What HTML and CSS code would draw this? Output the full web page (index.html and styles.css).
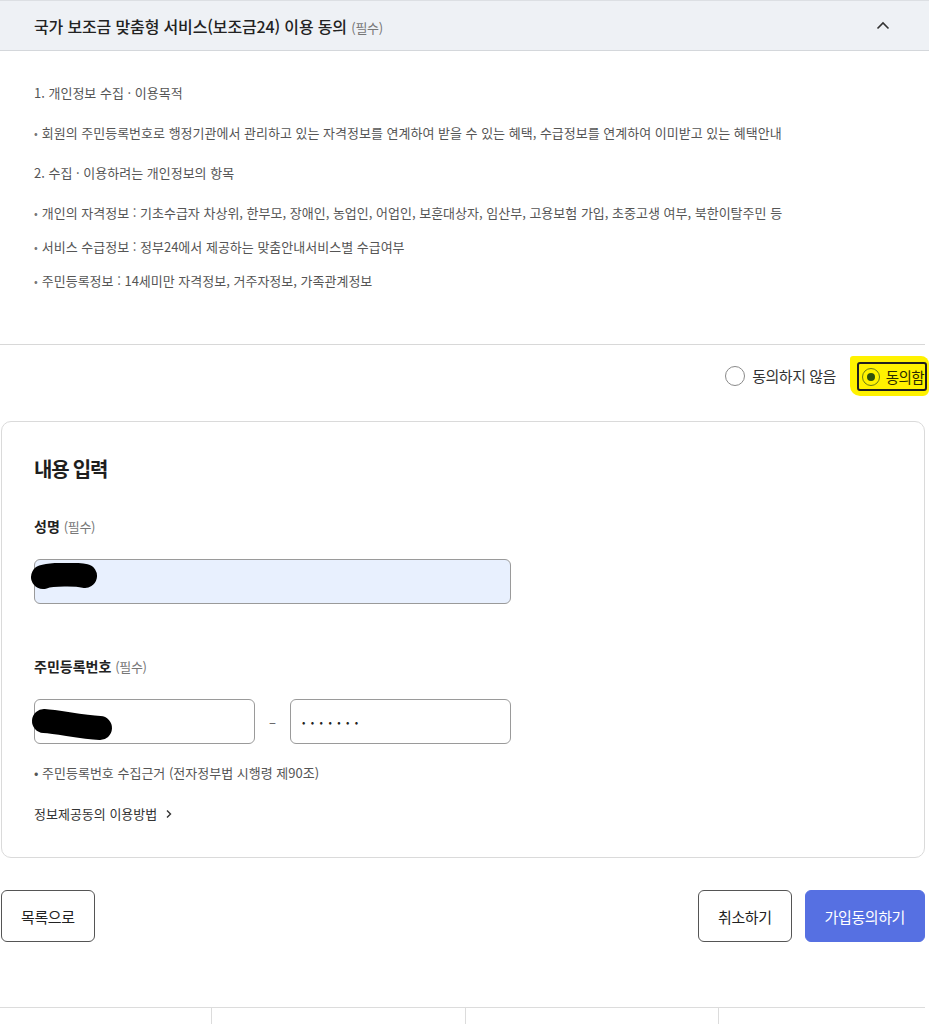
FILE: index.html
```html
<!DOCTYPE html>
<html lang="ko">
<head>
<meta charset="utf-8">
<title>보조금24 이용 동의</title>
<link rel="stylesheet" href="styles.css">
</head>
<body>
<div class="page">
  <section class="agree">
    <div class="agree-head">
      <h3 class="agree-title">국가 보조금 맞춤형 서비스(보조금24) 이용 동의 <span class="req">(필수)</span></h3>
      <svg class="chev-up" width="14" height="9" viewBox="0 0 14 9" aria-hidden="true">
        <path d="M1.5 7.5 L7 2 L12.5 7.5" fill="none" stroke="#333" stroke-width="1.6"/>
      </svg>
    </div>
    <div class="agree-body">
      <p class="agree-sub">1. 개인정보 수집 · 이용목적</p>
      <ul class="dot-list">
        <li>회원의 주민등록번호로 행정기관에서 관리하고 있는 자격정보를 연계하여 받을 수 있는 혜택, 수급정보를 연계하여 이미받고 있는 혜택안내</li>
      </ul>
      <p class="agree-sub">2. 수집 · 이용하려는 개인정보의 항목</p>
      <ul class="dot-list dot-list--tight">
        <li>개인의 자격정보 : 기초수급자 차상위, 한부모, 장애인, 농업인, 어업인, 보훈대상자, 임산부, 고용보험 가입, 초중고생 여부, 북한이탈주민 등</li>
        <li>서비스 수급정보 : 정부24에서 제공하는 맞춤안내서비스별 수급여부</li>
        <li>주민등록정보 : 14세미만 자격정보, 거주자정보, 가족관계정보</li>
      </ul>
    </div>
    <div class="agree-choice">
      <label class="radio"><span class="radio-ring"></span>동의하지 않음</label>
      <span class="marker">
        <label class="radio radio--on"><span class="radio-ring"></span>동의함</label>
      </span>
    </div>
  </section>

  <section class="card">
    <h2 class="card-title">내용 입력</h2>

    <div class="field">
      <p class="field-label">성명 <span class="req">(필수)</span></p>
      <div class="input input--filled input--wide">
        <svg class="redact" width="72" height="30" viewBox="0 0 72 30" aria-hidden="true">
          <path d="M13 14 C 22 11, 46 11, 55 13" fill="none" stroke="#000" stroke-width="24" stroke-linecap="round"/>
        </svg>
      </div>
    </div>

    <div class="field field--rrn">
      <p class="field-label">주민등록번호 <span class="req">(필수)</span></p>
      <div class="rrn-row">
        <div class="input input--half">
          <svg class="redact redact--rrn" width="90" height="38" viewBox="0 0 90 38" aria-hidden="true">
            <path d="M14 15 C 30 16, 50 21, 70 22" fill="none" stroke="#000" stroke-width="24" stroke-linecap="round"/>
          </svg>
        </div>
        <span class="rrn-dash">–</span>
        <div class="input input--half"><span class="secret">•••••••</span></div>
      </div>
      <p class="field-note">• 주민등록번호 수집근거 (전자정부법 시행령 제90조)</p>
      <a class="field-link" href="#">정보제공동의 이용방법
        <svg width="8" height="10" viewBox="0 0 8 10" aria-hidden="true"><path d="M2 1.5 L5.5 5 L2 8.5" fill="none" stroke="#333" stroke-width="1.4"/></svg>
      </a>
    </div>
  </section>

  <div class="actions">
    <button class="btn" type="button">목록으로</button>
    <div class="actions-right">
      <button class="btn" type="button">취소하기</button>
      <button class="btn btn--primary" type="button">가입동의하기</button>
    </div>
  </div>

  <footer class="foot">
    <div class="foot-col"><span>중앙행정기관</span><i class="foot-caret"></i></div>
    <div class="foot-col"><span>지방자치단체</span><i class="foot-caret"></i></div>
    <div class="foot-col"><span>공공기관</span><i class="foot-caret"></i></div>
    <div class="foot-col"></div>
  </footer>
</div>
</body>
</html>
```

FILE: styles.css
```css
* { box-sizing: border-box; }

html, body {
  margin: 0;
  padding: 0;
  background: #fff;
}

body {
  font-family: "Noto Sans CJK KR", "Noto Sans", sans-serif;
  color: #333;
  overflow: hidden;
}

.page {
  width: 925px;
}

/* ---------- accordion header ---------- */
.agree-head {
  display: flex;
  align-items: center;
  justify-content: space-between;
  height: 51px;
  padding: 0 39px 0 34px;
  background: #eef1f5;
  border-top: 1px solid #dcdfe3;
  border-bottom: 1px solid #d4d7db;
  margin-right: -4px;
}

.agree-title {
  margin: 0;
  font-size: 16px;
  font-weight: 500;
  letter-spacing: -0.15px;
  color: #222;
}

.req {
  font-size: 13px;
  font-weight: 400;
  color: #777;
  letter-spacing: -0.3px;
}

.chev-up { display: block; }

/* ---------- accordion body ---------- */
.agree-body {
  padding: 32px 34px 53px;
  border-bottom: 1px solid #d8d8d8;
  font-size: 13px;
  line-height: 20px;
  color: #555;
}

.agree-sub {
  margin: 0 0 20px;
}

.dot-list {
  list-style: none;
  margin: 0 0 20px;
  padding: 0;
}

.dot-list li {
  display: flex;
  gap: 4px;
}

.dot-list li::before {
  content: "•";
  color: #777;
  font-size: 11px;
}

.dot-list--tight {
  margin-bottom: 0;
  display: flex;
  flex-direction: column;
  gap: 14px;
}

/* ---------- agree radios ---------- */
.agree-choice {
  display: flex;
  justify-content: flex-end;
  align-items: center;
  gap: 14px;
  padding-top: 11px;
  margin-right: -4px;
}

.radio {
  display: flex;
  align-items: center;
  gap: 7px;
  font-size: 15px;
  letter-spacing: -0.5px;
  color: #333;
  line-height: 20px;
}

.radio-ring {
  width: 20px;
  height: 20px;
  border: 1px solid #8a8a8a;
  border-radius: 50%;
  background: #fff;
  display: flex;
  align-items: center;
  justify-content: center;
}

.marker {
  display: block;
  padding: 6px 2px 5px 7px;
  background: #fff200;
  border-radius: 3px 8px 6px 10px;
}

.radio--on {
  gap: 6px;
  height: 29px;
  padding: 0 1px 0 3px;
  border: 2px solid #1f1f1f;
  border-radius: 3px;
  font-size: 14.5px;
  letter-spacing: -0.6px;
  color: #2b2b00;
}

.radio--on .radio-ring {
  width: 18px;
  height: 18px;
  border: 1.5px solid #6b7d12;
  background: transparent;
}

.radio--on .radio-ring::after {
  content: "";
  width: 8px;
  height: 8px;
  border-radius: 50%;
  background: #2f500c;
}

/* ---------- input card ---------- */
.card {
  margin: 25px 0 0 1px;
  width: 924px;
  border: 1px solid #dadada;
  border-radius: 10px;
  padding: 33px 32px 33px;
}

.card-title {
  margin: 0;
  font-size: 20px;
  line-height: 28px;
  font-weight: 700;
  letter-spacing: -1.2px;
  color: #1e1e1e;
}

.field {
  margin-top: 33px;
}

.field--rrn {
  margin-top: 52px;
}

.field-label {
  margin: 0 0 22px;
  font-size: 14px;
  line-height: 20px;
  font-weight: 700;
  color: #222;
}

.field-label .req {
  font-size: 13px;
  color: #777;
}

.input {
  position: relative;
  height: 45px;
  border: 1px solid #9a9a9a;
  border-radius: 6px;
  background: #fff;
  display: flex;
  align-items: center;
  padding: 0 11px;
}

.input--wide { width: 477px; }
.input--half { width: 221px; }

.input--filled {
  background: #e8f0fe;
}

/* marker strokes laid over the typed value */
.redact {
  position: absolute;
  left: -5px;
  top: 3px;
}

.redact--rrn {
  left: -5px;
  top: 6px;
}

.rrn-row {
  display: flex;
  align-items: center;
}

.rrn-dash {
  width: 35px;
  text-align: center;
  font-size: 13px;
  color: #555;
}

.secret {
  font-size: 10px;
  letter-spacing: 5.4px;
  color: #222;
}

.field-note {
  margin: 19px 0 0;
  font-size: 13px;
  line-height: 20px;
  color: #555;
}

.field-link {
  margin-top: 21px;
  display: inline-flex;
  align-items: center;
  gap: 8px;
  font-size: 13px;
  line-height: 20px;
  color: #333;
  text-decoration: none;
}

/* ---------- buttons ---------- */
.actions {
  margin: 32px 0 0 1px;
  display: flex;
  justify-content: space-between;
}

.actions-right {
  display: flex;
  gap: 13px;
}

.btn {
  height: 52px;
  padding: 0 19px;
  border: 1px solid #555;
  border-radius: 6px;
  background: #fff;
  font-family: inherit;
  font-size: 15px;
  letter-spacing: -0.4px;
  color: #222;
}

.btn--primary {
  border-color: #5670e2;
  background: #5670e2;
  color: #fff;
}

/* ---------- footer ---------- */
.foot {
  margin-top: 65px;
  display: grid;
  grid-template-columns: 212px 254px 253px 1fr;
  border-top: 1px solid #dcdcdc;
}

.foot-col {
  display: flex;
  justify-content: space-between;
  align-items: flex-start;
  height: 60px;
  padding: 12px 28px 0 34px;
  border-right: 1px solid #dcdcdc;
  font-size: 14px;
  line-height: 20px;
  color: #aaa;
}

.foot-col:last-child { border-right: 0; }

.foot-caret {
  width: 7px;
  height: 7px;
  margin-top: 4px;
  border-right: 1.5px solid #aaa;
  border-bottom: 1.5px solid #aaa;
  transform: rotate(45deg);
}
```
